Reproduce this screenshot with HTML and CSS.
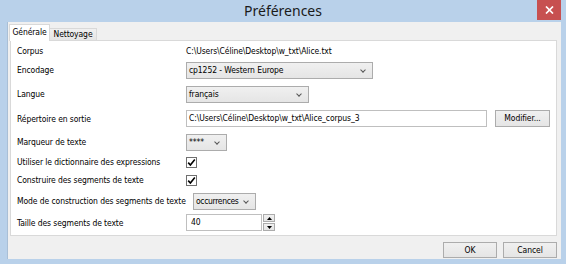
FILE: index.html
```html
<!DOCTYPE html>
<html>
<head>
<meta charset="utf-8">
<title>Préférences</title>
<link rel="stylesheet" href="styles.css">
</head>
<body>
<div class="window">
  <div class="titlebar">
    <span></span>
    <div class="title">Préférences</div>
    <div class="close"><svg width="9" height="8" viewBox="0 0 9 8"><path d="M1 0.5 L8 7.5 M8 0.5 L1 7.5" stroke="#fff" stroke-width="1.7"/></svg></div>
  </div>
  <div class="client">
    <div class="tabs">
      <div class="tab active">Générale</div>
      <div class="tab">Nettoyage</div>
    </div>
    <div class="pane">
      <div class="lbl">Corpus</div>
      <div class="val">C:\Users\Céline\Desktop\w_txt\Alice.txt</div>

      <div class="lbl">Encodage</div>
      <div class="val"><div class="combo w-enc">cp1252 - Western Europe<span class="chev"></span></div></div>

      <div class="lbl">Langue</div>
      <div class="val"><div class="combo w-lang">français<span class="chev"></span></div></div>

      <div class="lbl">Répertoire en sortie</div>
      <div class="val row"><div class="input w-dir">C:\Users\Céline\Desktop\w_txt\Alice_corpus_3</div><div class="btn w-mod">Modifier...</div></div>

      <div class="lbl">Marqueur de texte</div>
      <div class="val"><div class="combo w-mark">****<span class="chev"></span></div></div>

      <div class="lbl">Utiliser le dictionnaire des expressions</div>
      <div class="val"><div class="check"><svg width="9" height="9" viewBox="0 0 9 9"><path d="M1.2 4.6 L3.4 7 L7.8 1.6" fill="none" stroke="#000" stroke-width="1.6"/></svg></div></div>

      <div class="lbl">Construire des segments de texte</div>
      <div class="val"><div class="check"><svg width="9" height="9" viewBox="0 0 9 9"><path d="M1.2 4.6 L3.4 7 L7.8 1.6" fill="none" stroke="#000" stroke-width="1.6"/></svg></div></div>

      <div class="lbl">Mode de construction des segments de texte</div>
      <div class="val"><div class="combo w-mode">occurrences<span class="chev"></span></div></div>

      <div class="lbl">Taille des segments de texte</div>
      <div class="val row"><div class="input w-size">40</div>
        <div class="spin">
          <div class="spin-btn"><svg width="5" height="3" viewBox="0 0 5 3"><path d="M0 3 L2.5 0 L5 3Z" fill="#000"/></svg></div>
          <div class="spin-btn"><svg width="5" height="3" viewBox="0 0 5 3"><path d="M0 0 L2.5 3 L5 0Z" fill="#000"/></svg></div>
        </div>
      </div>
    </div>
    <div class="buttons">
      <div class="btn w-dlg">OK</div>
      <div class="btn w-dlg">Cancel</div>
    </div>
  </div>
</div>
</body>
</html>
```
FILE: styles.css
```css
* { box-sizing: border-box; margin: 0; padding: 0; }
html, body { width: 566px; height: 264px; overflow: hidden; }
body {
  font-family: "DejaVu Sans Condensed", "DejaVu Sans", sans-serif;
  font-stretch: condensed;
  font-size: 8.5px;
  letter-spacing: -0.1px;
  color: #000;
  background: #b9d1ea;
}
.window {
  height: 264px;
  background: #b9d1ea;
  padding: 0 5px 5px 8px;
  display: flex;
  flex-direction: column;
}
.titlebar {
  height: 22px;
  margin: 0 -5px 0 -8px;
  display: grid;
  grid-template-columns: 1fr auto 1fr;
  align-items: start;
}
.title {
  font-family: "Noto Sans", "Open Sans", sans-serif;
  font-stretch: normal;
  letter-spacing: 0;
  font-size: 14px;
  line-height: 22px;
  color: #1a1a1a;
}
.close {
  justify-self: end;
  width: 24px;
  height: 20px;
  margin-right: 5px;
  background: #c75050;
  display: flex;
  align-items: center;
  justify-content: center;
}
.client {
  flex: 1;
  background: #f0f0f0;
  border-left: 1px solid #a9bfd6;
  margin-left: -1px;
  padding: 2px 4px 1px 2px;
  display: flex;
  flex-direction: column;
}
.tabs {
  display: flex;
  align-items: flex-end;
  height: 16px;
  margin-left: -1px;
  position: relative;
  z-index: 1;
}
.tab {
  height: 12px;
  width: 47px;
  border: 1px solid #d9d9d9;
  border-bottom: none;
  border-left: none;
  background: linear-gradient(#f0f0f0, #e5e5e5);
  line-height: 11px;
  text-align: center;
  white-space: nowrap;
}
.tab.active {
  height: 17px;
  width: 41px;
  margin-bottom: -1px;
  border-left: 1px solid #d9d9d9;
  background: #fff;
  line-height: 15px;
}
.pane {
  height: 196px;
  background: #fff;
  border: 1px solid #d9d9d9;
  padding: 0 6px;
  display: grid;
  grid-template-columns: 169px 1fr;
  grid-template-rows: 20px 18px 30px 19px 28px 12px 24px 18px 25px;
  align-items: center;
}
.lbl { white-space: nowrap; }
.val { white-space: nowrap; }
.row { display: flex; align-items: center; }
.combo {
  position: relative;
  height: 17px;
  border: 1px solid #acacac;
  background: linear-gradient(#f0f0f0, #e5e5e5);
  line-height: 15px;
  padding-left: 2px;
}
.chev {
  position: absolute;
  right: 7px;
  top: 5px;
  width: 4px;
  height: 4px;
  border-right: 1px solid #555;
  border-bottom: 1px solid #555;
  transform: rotate(45deg);
}
.w-enc { width: 187px; }
.w-lang { width: 123px; }
.w-mark { width: 41px; }
.w-mode { width: 63px; margin-left: 7px; letter-spacing: -0.35px; }
.input {
  height: 17px;
  border: 1px solid #bfbfbf;
  background: #fff;
  line-height: 15px;
  padding-left: 2px;
}
.w-dir { width: 301px; }
.w-size { width: 76px; height: 17px; padding-left: 4px; }
.btn {
  height: 17px;
  border: 1px solid #acacac;
  background: linear-gradient(#f0f0f0, #e5e5e5);
  text-align: center;
  line-height: 15px;
}
.w-mod { width: 55px; margin-left: 8px; }
.check {
  width: 11px;
  height: 11px;
  border: 1px solid #707070;
  background: #fff;
  display: flex;
  align-items: center;
  justify-content: center;
}
.spin {
  margin-left: 1px;
  display: flex;
  flex-direction: column;
  gap: 1px;
}
.spin-btn {
  width: 12px;
  height: 8px;
  border: 1px solid #acacac;
  background: linear-gradient(#f0f0f0, #e5e5e5);
  display: flex;
  align-items: center;
  justify-content: center;
}
.buttons {
  margin-top: 6px;
  display: flex;
  justify-content: flex-end;
  gap: 6px;
}
.w-dlg { width: 54px; height: 16px; line-height: 14px; }
```
